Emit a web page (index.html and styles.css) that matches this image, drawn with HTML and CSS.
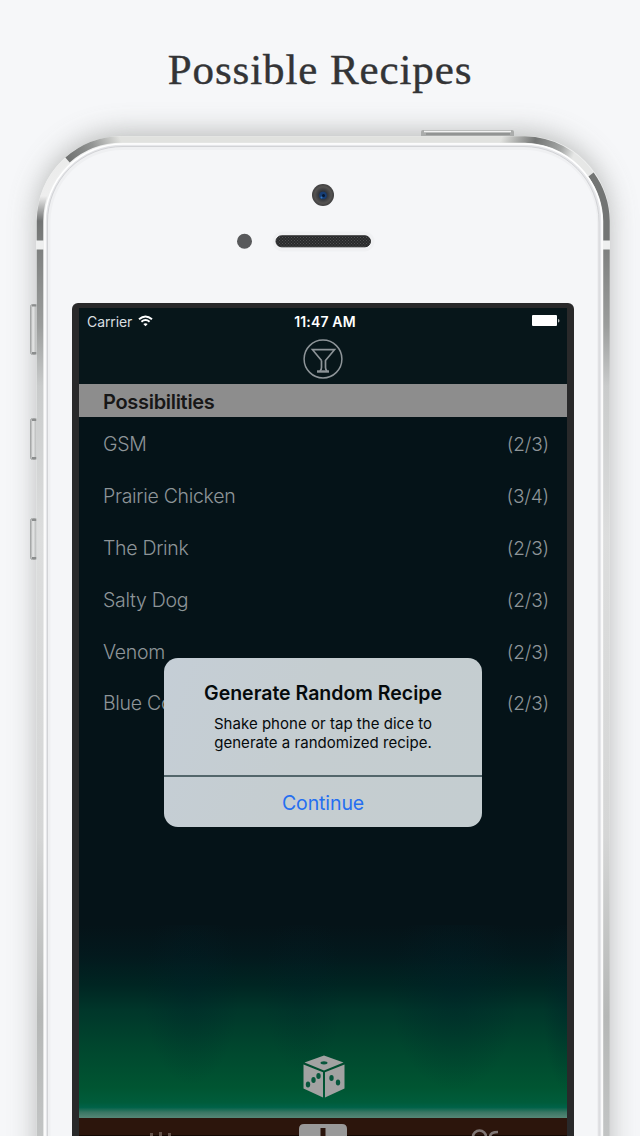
FILE: index.html
```
<!DOCTYPE html>
<html lang="en">
<head>
<meta charset="utf-8">
<title>Possible Recipes</title>
<link rel="stylesheet" href="styles.css">
</head>
<body>
<main class="page">
  <svg class="device" width="640" height="1136" viewBox="0 0 640 1136" aria-hidden="true">
    <defs>
      <linearGradient id="side" gradientUnits="userSpaceOnUse" x1="0" y1="136" x2="0" y2="1136">
        <stop offset="0" stop-color="#e9eae9"/><stop offset=".06" stop-color="#eeeeee"/><stop offset=".085" stop-color="#727474"/><stop offset=".11" stop-color="#7d7f7e"/><stop offset=".19" stop-color="#9b9d9c"/><stop offset=".25" stop-color="#c9cbcb"/><stop offset=".4" stop-color="#dcdddd"/><stop offset=".7" stop-color="#d5d6d6"/><stop offset=".88" stop-color="#b5b7b6"/><stop offset="1" stop-color="#c2c4c4"/>
      </linearGradient>
      <linearGradient id="topLeft" gradientUnits="userSpaceOnUse" x1="67" y1="158" x2="120" y2="138">
        <stop offset="0" stop-color="#707271"/><stop offset=".5" stop-color="#939594"/><stop offset="1" stop-color="#e1e2df"/>
      </linearGradient>
      <linearGradient id="topRight" gradientUnits="userSpaceOnUse" x1="490" y1="138" x2="592" y2="175">
        <stop offset="0" stop-color="#e1e2df"/><stop offset=".1" stop-color="#e1e2df"/><stop offset=".4" stop-color="#737574"/><stop offset=".65" stop-color="#a5a7a6"/><stop offset=".78" stop-color="#e6e7e6"/><stop offset="1" stop-color="#e6e7e6"/>
      </linearGradient>
      <linearGradient id="button" x1="0" y1="0" x2="1" y2="0"><stop offset="0" stop-color="#a2a4a4"/><stop offset=".35" stop-color="#e8e9e9"/><stop offset="1" stop-color="#a5a7a7"/></linearGradient>
      <radialGradient id="lens"><stop offset="0" stop-color="#173765"/><stop offset=".35" stop-color="#30343a"/><stop offset=".75" stop-color="#555352"/><stop offset="1" stop-color="#3e3e3f"/></radialGradient>
      <pattern id="mesh" width="3" height="3" patternUnits="userSpaceOnUse"><rect width="3" height="3" fill="#292a2b"/><rect width="1" height="1" fill="#505152"/><rect x="1.5" y="1.5" width="1" height="1" fill="#505152"/></pattern>
      <filter id="soft" x="-20%" y="-20%" width="140%" height="140%"><feGaussianBlur stdDeviation="14"/></filter>
    </defs>
    <rect x="37" y="133" width="572" height="1120" rx="86" fill="#a5a7a5" opacity=".8" filter="url(#soft)"/>
    <g stroke="#a5a7a7" stroke-width="1" fill="url(#button)">
      <rect x="30.5" y="304.5" width="7" height="50" rx="2"/>
      <rect x="30.5" y="418.5" width="7" height="41" rx="2"/>
      <rect x="30.5" y="518.5" width="7" height="41" rx="2"/>
    </g>
    <path d="M32 305.500h5M32 353h5M32 420h5M32 458h5M32 520h5M32 558h5" stroke="#8b8d8d" stroke-width="2"/>
    <path d="M421 137v-5q0-2 2-2h89q2 0 2 2v5" fill="#aaacab"/>
    <path d="M424 131.500h87" stroke="#f2f2f2" stroke-width="1.500"/>
    <path d="M426 134h84" stroke="#929493" stroke-width="2"/>
    <path d="M36.500 1140V221A85 85 0 0 1 121.500 136H525A85 85 0 0 1 610 221V1140Z" fill="#eeefef"/>
    <g fill="none" stroke-width="6.500">
      <path d="M40 1140V221A82 82 0 0 1 67.500 160" stroke="url(#side)"/>
      <path d="M67.500 160A82 82 0 0 1 122 139.500" stroke="url(#topLeft)"/>
      <path d="M121.500 139.500H500.500" stroke="#e1e2df"/>
      <path d="M500 139.500H525A82 82 0 0 1 591 174.500" stroke="url(#topRight)"/>
      <path d="M591 174.500A82 82 0 0 1 606.500 221V242" stroke="#737574"/>
      <path d="M606.500 242V1140" stroke="url(#side)"/>
    </g>
    <path d="M36 240.500h8v9h-8zM602 240.500h8v9h-8z" fill="#eeefef"/>
    <path d="M45 1140V222A78 78 0 0 1 123 144H524A78 78 0 0 1 602 222V1140Z" fill="#e6e7ea" stroke="#fff" stroke-width="1.500"/>
    <path d="M47.500 1140V222A75 75 0 0 1 123 146.500H524A75 75 0 0 1 599 222V1140" fill="#eff0f2" stroke="#d2d3d6" stroke-width="1"/>
    <path d="M50.500 1140V222A72 72 0 0 1 123 150H524A72 72 0 0 1 597 222V1140Z" fill="#f5f6f8"/>
    <circle cx="323" cy="195" r="11" fill="url(#lens)"/>
    <circle cx="323" cy="195.500" r="3.800" fill="#173e75"/><circle cx="323.500" cy="195.500" r="1.500" fill="#06172f"/><circle cx="321.500" cy="197.500" r="1" fill="#3778bd"/>
    <circle cx="244.500" cy="241.300" r="7.500" fill="#58595b"/>
    <rect x="272.500" y="231.500" width="102" height="20" rx="10" fill="#f0f1f3"/>
    <rect x="276" y="235.800" width="94.500" height="11" rx="5.500" fill="url(#mesh)" stroke="#2a2b2c"/>
  </svg>

  <h1 class="headline">Possible Recipes</h1>

  <section class="screen">
    <header class="statusbar">
      <span class="carrier">Carrier
        <svg width="15" height="12" viewBox="0 0 15 12" fill="none" stroke="#fff" stroke-width="1.900"><path d="M1 4.300Q7.500-1.400 14 4.300M3.400 6.800Q7.500 3.300 11.600 6.800"/><path d="M5.300 9Q7.500 7.400 9.700 9L7.500 11.300Z" fill="#fff" stroke="none"/></svg>
      </span>
      <time class="clock">11:47 AM</time>
      <svg class="battery" width="29" height="12" viewBox="0 0 29 12" fill="#fff"><rect x="1" width="25" height="11" rx="1"/><path d="M27 4q1.500 0 1.500 1.800T27 7.500z" opacity=".7"/></svg>
    </header>
    <div class="navbar">
      <svg width="40" height="40" viewBox="0 0 40 40" fill="none" stroke="#8d9498"><circle cx="20" cy="20" r="18.900" stroke-width="1.500"/><path d="M18.500 21.500 9.500 10.700h22L22.500 21.500v7q0 2 1.500 3.500M18.500 21.500v7q0 2-1.500 3.500" stroke-width="1.700"/><path d="M14 32.500h12" stroke-width="2.400"/></svg>
    </div>
    <h2 class="group">Possibilities</h2>
    <ul class="recipes">
      <li><span>GSM</span><span class="count">(2/3)</span></li>
      <li><span>Prairie Chicken</span><span class="count">(3/4)</span></li>
      <li><span>The Drink</span><span class="count">(2/3)</span></li>
      <li><span>Salty Dog</span><span class="count">(2/3)</span></li>
      <li><span>Venom</span><span class="count">(2/3)</span></li>
      <li><span>Blue Coat</span><span class="count">(2/3)</span></li>
    </ul>
    <div class="aurora">
      <svg width="42" height="44" viewBox="0 0 42 44"><path d="M21 .500 40.500 7.500 21 15.500 1.500 7.500ZM.500 9.500 20 17.300V42.500L.500 33.500ZM41.500 9.500 22 17.300V42.500L41.500 33.500Z" fill="#a2a2a2"/><g fill="#07563c"><ellipse cx="21" cy="7.800" rx="3.500" ry="1.600"/><ellipse cx="5" cy="29.500" rx="2.200" ry="2.900"/><ellipse cx="10.500" cy="25" rx="2.200" ry="2.900"/><ellipse cx="15.500" cy="21" rx="2.200" ry="2.900"/><ellipse cx="28.500" cy="23" rx="2.200" ry="2.900"/><ellipse cx="35" cy="27.500" rx="2.200" ry="2.900"/></g></svg>
    </div>
    <nav class="tabs">
      <svg width="160" height="18" viewBox="0 0 160 18"><path d="M72 15h3v3h-3zM81 14h3v4h-3zM90 15h3v3h-3z" fill="#65534b"/></svg>
      <svg width="48" height="18" viewBox="0 0 48 18"><path d="M0 18v-7q0-5 5-5h38q5 0 5 5v7z" fill="#999"/><path d="M21.500 10h5v8h-5z" fill="#2b150d"/></svg>
      <svg width="160" height="18" viewBox="0 0 160 18" fill="none" stroke="#817775" stroke-width="2.600"><path d="M65 19a6.500 6.500 0 0 1 13 0M82 19q0-5 8-5"/></svg>
    </nav>
  </section>

  <div class="dialog" role="dialog">
    <div class="message">
      <h3>Generate Random Recipe</h3>
      <p>Shake phone or tap the dice to<br>generate a randomized recipe.</p>
    </div>
    <button class="action">Continue</button>
  </div>
</main>
</body>
</html>
```
FILE: styles.css
```
* { box-sizing: border-box; }
body { margin: 0; background: #f6f7f9; font-family: Inter, "Liberation Sans", sans-serif; }
.page { position: relative; width: 640px; height: 1136px; overflow: hidden; background: #f6f7f9; }
.device { position: absolute; inset: 0; }
.headline { position: relative; margin: 0; height: 303px; padding-top: 40px; text-align: center; font: 400 43px/60px "Liberation Serif", serif; letter-spacing: .9px; color: #333436; -webkit-text-stroke: .4px #333436; }
.screen { position: relative; display: flex; flex-direction: column; width: 502px; height: 840px; margin-left: 72px; padding: 5px 7px 0; border-radius: 6px 6px 0 0; background: #29292a; color: #8e9598; }
.statusbar { display: grid; grid-template-columns: 1fr auto 1fr; align-items: center; height: 27px; padding: 0 7px 0 8px; background: #07161a; color: #fff; font-size: 14px; }
.carrier { display: flex; align-items: center; gap: 6px; color: #d9dfe0; letter-spacing: -.1px; }
.carrier svg { margin-top: -2px; }
.clock { padding-left: 3px; font-weight: 600; font-size: 14px; letter-spacing: .15px; }
.battery { justify-self: end; margin-top: -1px; }
.navbar { display: flex; justify-content: center; height: 49px; padding-top: 4px; background: #07161a; }
.group { margin: 0; height: 33px; padding: 1px 0 0 24px; background: #8d8d8d; color: #171717; font-size: 20px; line-height: 35px; font-weight: 600; letter-spacing: -.3px; }
.recipes { margin: 0; padding: 1px 18px 0 24px; height: 508px; list-style: none; background: #051318; font-size: 19.500px; font-weight: 300; letter-spacing: -.3px; }
.recipes li { display: flex; align-items: center; justify-content: space-between; height: 51.900px; }
.count { padding-top: 1px; font-size: 19px; letter-spacing: -.15px; }
.aurora { display: flex; justify-content: center; height: 193px; padding: 130px 0 0 2px; background: radial-gradient(ellipse 48px 95px at 23% 34%, #00202855, #00202800), radial-gradient(ellipse 40px 85px at 46% 34%, #00202833, #00202800), radial-gradient(ellipse 65px 100px at 77% 34%, #00202866, #00202800), radial-gradient(ellipse 24px 90px at 100% 40%, #00202866, #00202800), linear-gradient(#051318 0%, #03191d 16%, #002522 31%, #00362a 44%, #00472e 64%, #005532 84%, #005c3b 92%, #006248 94.500%, #397663 97%, #568777 100%); }
.aurora svg { flex: none; }
.tabs { display: flex; justify-content: center; gap: 61px; height: 18px; background: #2c150c; box-shadow: inset 0 -1px #140803; }
.tabs svg { flex: none; }
.dialog { position: absolute; left: 164px; top: 658px; width: 318px; height: 169px; display: flex; flex-direction: column; overflow: hidden; border-radius: 14px; background: linear-gradient(110deg, #c5ced6, #c5cdd0 45%, #c4cdd0); color: #050a0c; text-align: center; }
.message { height: 119px; padding-top: 22px; border-bottom: 2px solid #53666b; }
.message h3 { margin: 0; font-size: 19.500px; line-height: 26px; font-weight: 600; }
.message p { margin: 8px 0 0; font-size: 15px; line-height: 19px; letter-spacing: .03px; }
.action { flex: 1; border: 0; padding: 1px 0 0; background: none; color: #256ff0; font: 400 19.500px Inter, sans-serif; letter-spacing: -.1px; }
```
